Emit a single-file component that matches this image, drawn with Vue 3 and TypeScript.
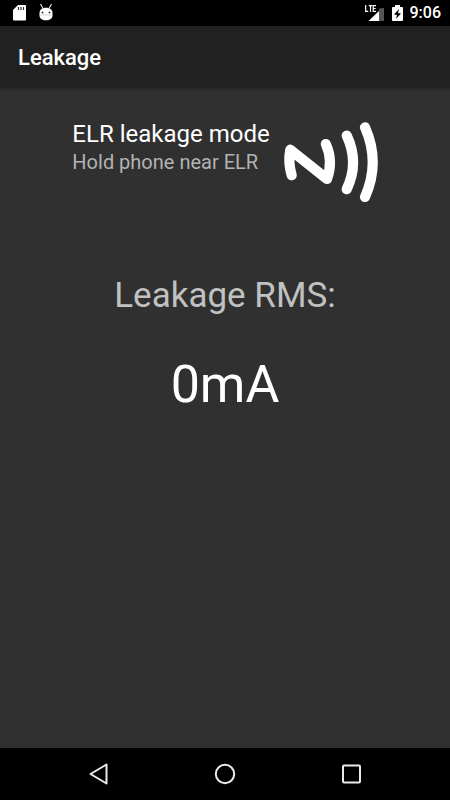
<script setup lang="ts">
import { ref } from 'vue'

const title = ref<string>('Leakage')
const clock = ref<string>('9:06')
const leakage = ref<number>(0)
</script>

<template>
  <div class="screen">
    <div class="status">
      <div class="group notices">
        <svg width="14" height="18" viewBox="0 0 14 18" aria-hidden="true">
          <path d="M5 1h7a1 1 0 0 1 1 1v13.500a1 1 0 0 1-1 1H1a1 1 0 0 1-1-1V6z" fill="#fff" />
          <path d="M5.500 3v3M8 3v3M10.500 3v3" stroke="#333" stroke-width="1.200" />
        </svg>
        <svg width="14" height="18" viewBox="0 0 14 18" aria-hidden="true">
          <path d="M1.500 0l2.500 4.500M12.500 0L10 4.500" stroke="#ddd" stroke-width="1.200" />
          <path d="M.5 9C.5 5.500 3.500 3.800 7 3.800S13.500 5.500 13.500 9v2.500c0 3-2.500 4.800-6.500 4.800S.5 14.500.5 11.500z" fill="#fff" />
          <circle cx="3.500" cy="8.500" r="1" fill="#333" />
          <circle cx="10.500" cy="8.500" r="1" fill="#333" />
          <path d="M.5 11h13" stroke="#bbb" stroke-width=".6" />
        </svg>
      </div>
      <div class="group system">
        <svg width="20" height="18" viewBox="0 0 20 18" aria-hidden="true">
          <path d="M14 4.500l5-.5v13h-5z" fill="#555" />
          <path d="M3.500 17L14 7v10z" fill="#fff" />
          <path d="M.7 1v6.300h2.500M3.800 1.700h3.500M5.500 1.700V8M11 1.700H8.200v5.600H11M8.200 4.500h2.500" fill="none" stroke="#fff" stroke-width="1.200" />
        </svg>
        <svg width="11" height="18" viewBox="0 0 11 18" aria-hidden="true">
          <path d="M3 1h5v2h2a1 1 0 0 1 1 1v12a1 1 0 0 1-1 1H1a1 1 0 0 1-1-1V4a1 1 0 0 1 1-1h2z" fill="#fff" />
          <path d="M7 5L2 10.500l3 .5-1 4 5-5.500-3-.5z" fill="#000" />
        </svg>
        <span class="clock">{{ clock }}</span>
      </div>
    </div>

    <header class="app-bar">
      <h1>{{ title }}</h1>
    </header>

    <main>
      <section class="mode">
        <div>
          <h2>ELR leakage mode</h2>
          <p class="hint">Hold phone near ELR</p>
        </div>
        <svg width="96" height="82" viewBox="7 8 96 82" aria-hidden="true">
          <g fill="none" stroke="#fff" stroke-width="10.200" stroke-linecap="round" stroke-linejoin="round">
            <path d="M16.700 63.200Q12.800 50 15.300 37.700L52 67Q58.500 49 50.800 32" />
            <path d="M71.700 23.500Q84.500 50.500 71.700 77.200" />
            <path d="M90 15.300Q105.500 50.500 90 85" />
          </g>
        </svg>
      </section>
      <section class="reading">
        <h2 class="label">Leakage RMS:</h2>
        <p class="value">{{ leakage }}mA</p>
      </section>
    </main>

    <nav>
      <button type="button" aria-label="Back">
        <svg width="22" height="22" viewBox="0 0 22 22"><path d="M17.500 1.500v19L1.500 11z" /></svg>
      </button>
      <button type="button" aria-label="Home">
        <svg width="22" height="22" viewBox="0 0 22 22"><circle cx="11" cy="11" r="9.200" /></svg>
      </button>
      <button type="button" aria-label="Overview">
        <svg width="22" height="22" viewBox="0 0 22 22"><rect x="3" y="2.500" width="17" height="17" rx="1" /></svg>
      </button>
    </nav>
  </div>
</template>

<style>
body {
  margin: 0;
  background: #303030;
}
</style>

<style scoped>
.screen {
  display: flex;
  flex-direction: column;
  min-height: 100vh;
  background: #303030;
  color: #fff;
  font-family: Roboto, 'Liberation Sans', sans-serif;
}

h1,
h2,
p {
  margin: 0;
  font-weight: 400;
}

svg {
  display: block;
  flex: none;
}

.status {
  display: flex;
  justify-content: space-between;
  align-items: center;
  height: 26px;
  padding: 0 9px 0 13px;
  background: #000;
}

.group {
  display: flex;
  align-items: center;
}

.notices {
  gap: 12px;
}

.system {
  gap: 7px;
}

.clock {
  font-size: 16px;
  font-weight: 500;
  line-height: 28px;
}

.app-bar {
  display: flex;
  align-items: center;
  height: 62px;
  padding: 0 18px;
  background: #212121;
  box-shadow: 0 1px 3px rgba(0, 0, 0, 0.3);
}

h1 {
  padding-top: 2px;
  font-size: 22px;
  font-weight: 500;
  line-height: 28px;
}

main {
  flex: 1;
  padding-top: 32px;
}

.mode {
  display: flex;
  justify-content: center;
  gap: 12px;
}

.mode h2 {
  font-size: 24px;
  line-height: 28px;
}

.hint {
  color: #b3b3b3;
  font-size: 20px;
  line-height: 28px;
}

.reading {
  padding-top: 72px;
  text-align: center;
}

.label {
  color: #c1c1c1;
  font-size: 35px;
  line-height: 44px;
}

.value {
  padding-top: 35px;
  font-size: 52px;
  line-height: 64px;
}

nav {
  display: flex;
  justify-content: center;
  gap: 23%;
  height: 52px;
  background: #000;
}

button {
  display: flex;
  align-items: center;
  padding: 0;
  border: 0;
  background: none;
}

button svg {
  fill: none;
  stroke: #ebebeb;
  stroke-width: 2;
  stroke-linejoin: round;
}
</style>
